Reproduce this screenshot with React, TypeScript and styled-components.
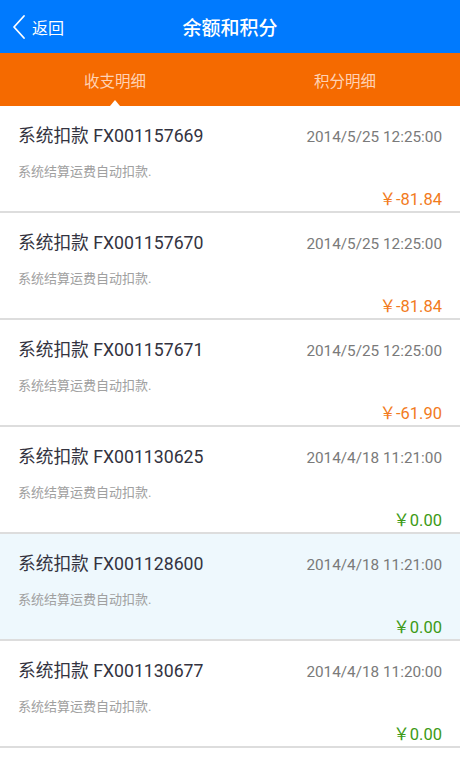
import React, { useState } from 'react';
import styled, { createGlobalStyle } from 'styled-components';

const GlobalStyle = createGlobalStyle`
  html, body {
    margin: 0;
    padding: 0;
    background: #ffffff;
    font-family: Roboto, "Noto Sans CJK SC", "Noto Sans", sans-serif;
  }
`;

const Page = styled.div`
  width: 460px;
  height: 767px;
  overflow: hidden;
  background: #ffffff;
`;

const TopBar = styled.header`
  align-items: center;
  background-color: #007afe;
  display: flex;
  height: 53px;
  position: relative;
`;

const BackButton = styled.button`
  align-items: center;
  background: none;
  border: none;
  color: #ffffff;
  display: flex;
  font-family: inherit;
  font-size: 16px;
  gap: 6px;
  padding: 0 0 0 12px;
`;

const Title = styled.h1`
  color: #ffffff;
  font-size: 19px;
  font-weight: 500;
  left: 0;
  margin: 0;
  pointer-events: none;
  position: absolute;
  right: 0;
  text-align: center;
`;

const Tabs = styled.nav`
  background-color: #f56a00;
  display: flex;
  height: 53px;
`;

const Tab = styled.button<{ active: boolean }>`
  background: none;
  border: none;
  color: #ffd2b4;
  flex: 1;
  font-family: inherit;
  font-size: 15.5px;
  padding: 0;
  position: relative;

  &::after {
    border-bottom: 6px solid #ffffff;
    border-left: 5px solid transparent;
    border-right: 5px solid transparent;
    bottom: 0;
    content: '';
    display: ${(props) => (props.active ? 'block' : 'none')};
    left: 50%;
    position: absolute;
    transform: translateX(-50%);
  }
`;

const List = styled.ul`
  list-style: none;
  margin: 0;
  padding: 0;
`;

const Item = styled.li<{ highlight?: boolean }>`
  background-color: ${(props) => (props.highlight ? '#eef8fd' : '#ffffff')};
  border-bottom: 2px solid #dddddd;
  box-sizing: border-box;
  display: flex;
  flex-direction: column;
  height: 107px;
  padding: 15px 18px 0 18px;
`;

const Row = styled.div`
  align-items: baseline;
  display: flex;
  justify-content: space-between;
`;

const ItemTitle = styled.span`
  color: #333340;
  font-size: 17.7px;
`;

const ItemDate = styled.span`
  color: #7a7a7a;
  font-size: 15.3px;
`;

const Description = styled.p`
  color: #a0a0a0;
  font-size: 13px;
  margin: 14px 0 0 0;
`;

const Amount = styled.div<{ tone: 'out' | 'zero' }>`
  align-self: flex-end;
  color: ${(props) => (props.tone === 'out' ? '#f27b1d' : '#3d9a16')};
  font-size: 16.5px;
  margin-top: 6px;
`;

interface Record {
  code: string;
  date: string;
  amount: string;
  highlight?: boolean;
}

const records: Record[] = [
  { code: 'FX001157669', date: '2014/5/25 12:25:00', amount: '-81.84' },
  { code: 'FX001157670', date: '2014/5/25 12:25:00', amount: '-81.84' },
  { code: 'FX001157671', date: '2014/5/25 12:25:00', amount: '-61.90' },
  { code: 'FX001130625', date: '2014/4/18 11:21:00', amount: '0.00' },
  { code: 'FX001128600', date: '2014/4/18 11:21:00', amount: '0.00', highlight: true },
  { code: 'FX001130677', date: '2014/4/18 11:20:00', amount: '0.00' },
];

function ChevronLeft() {
  return (
    <svg width="14" height="26" viewBox="0 0 14 26" fill="none">
      <path d="M12 2 L2 13 L12 24" stroke="#ffffff" strokeWidth="1.8" strokeLinecap="round" strokeLinejoin="round" />
    </svg>
  );
}

export default function App() {
  const [tab, setTab] = useState(0);

  return (
    <Page>
      <GlobalStyle />
      <TopBar>
        <BackButton type="button">
          <ChevronLeft />
          返回
        </BackButton>
        <Title>余额和积分</Title>
      </TopBar>
      <Tabs>
        <Tab type="button" active={tab === 0} onClick={() => setTab(0)}>收支明细</Tab>
        <Tab type="button" active={tab === 1} onClick={() => setTab(1)}>积分明细</Tab>
      </Tabs>
      <List>
        {records.map((r) => (
          <Item key={r.code} highlight={r.highlight}>
            <Row>
              <ItemTitle>系统扣款 {r.code}</ItemTitle>
              <ItemDate>{r.date}</ItemDate>
            </Row>
            <Description>系统结算运费自动扣款.</Description>
            <Amount tone={r.amount.startsWith('-') ? 'out' : 'zero'}>￥{r.amount}</Amount>
          </Item>
        ))}
      </List>
    </Page>
  );
}
